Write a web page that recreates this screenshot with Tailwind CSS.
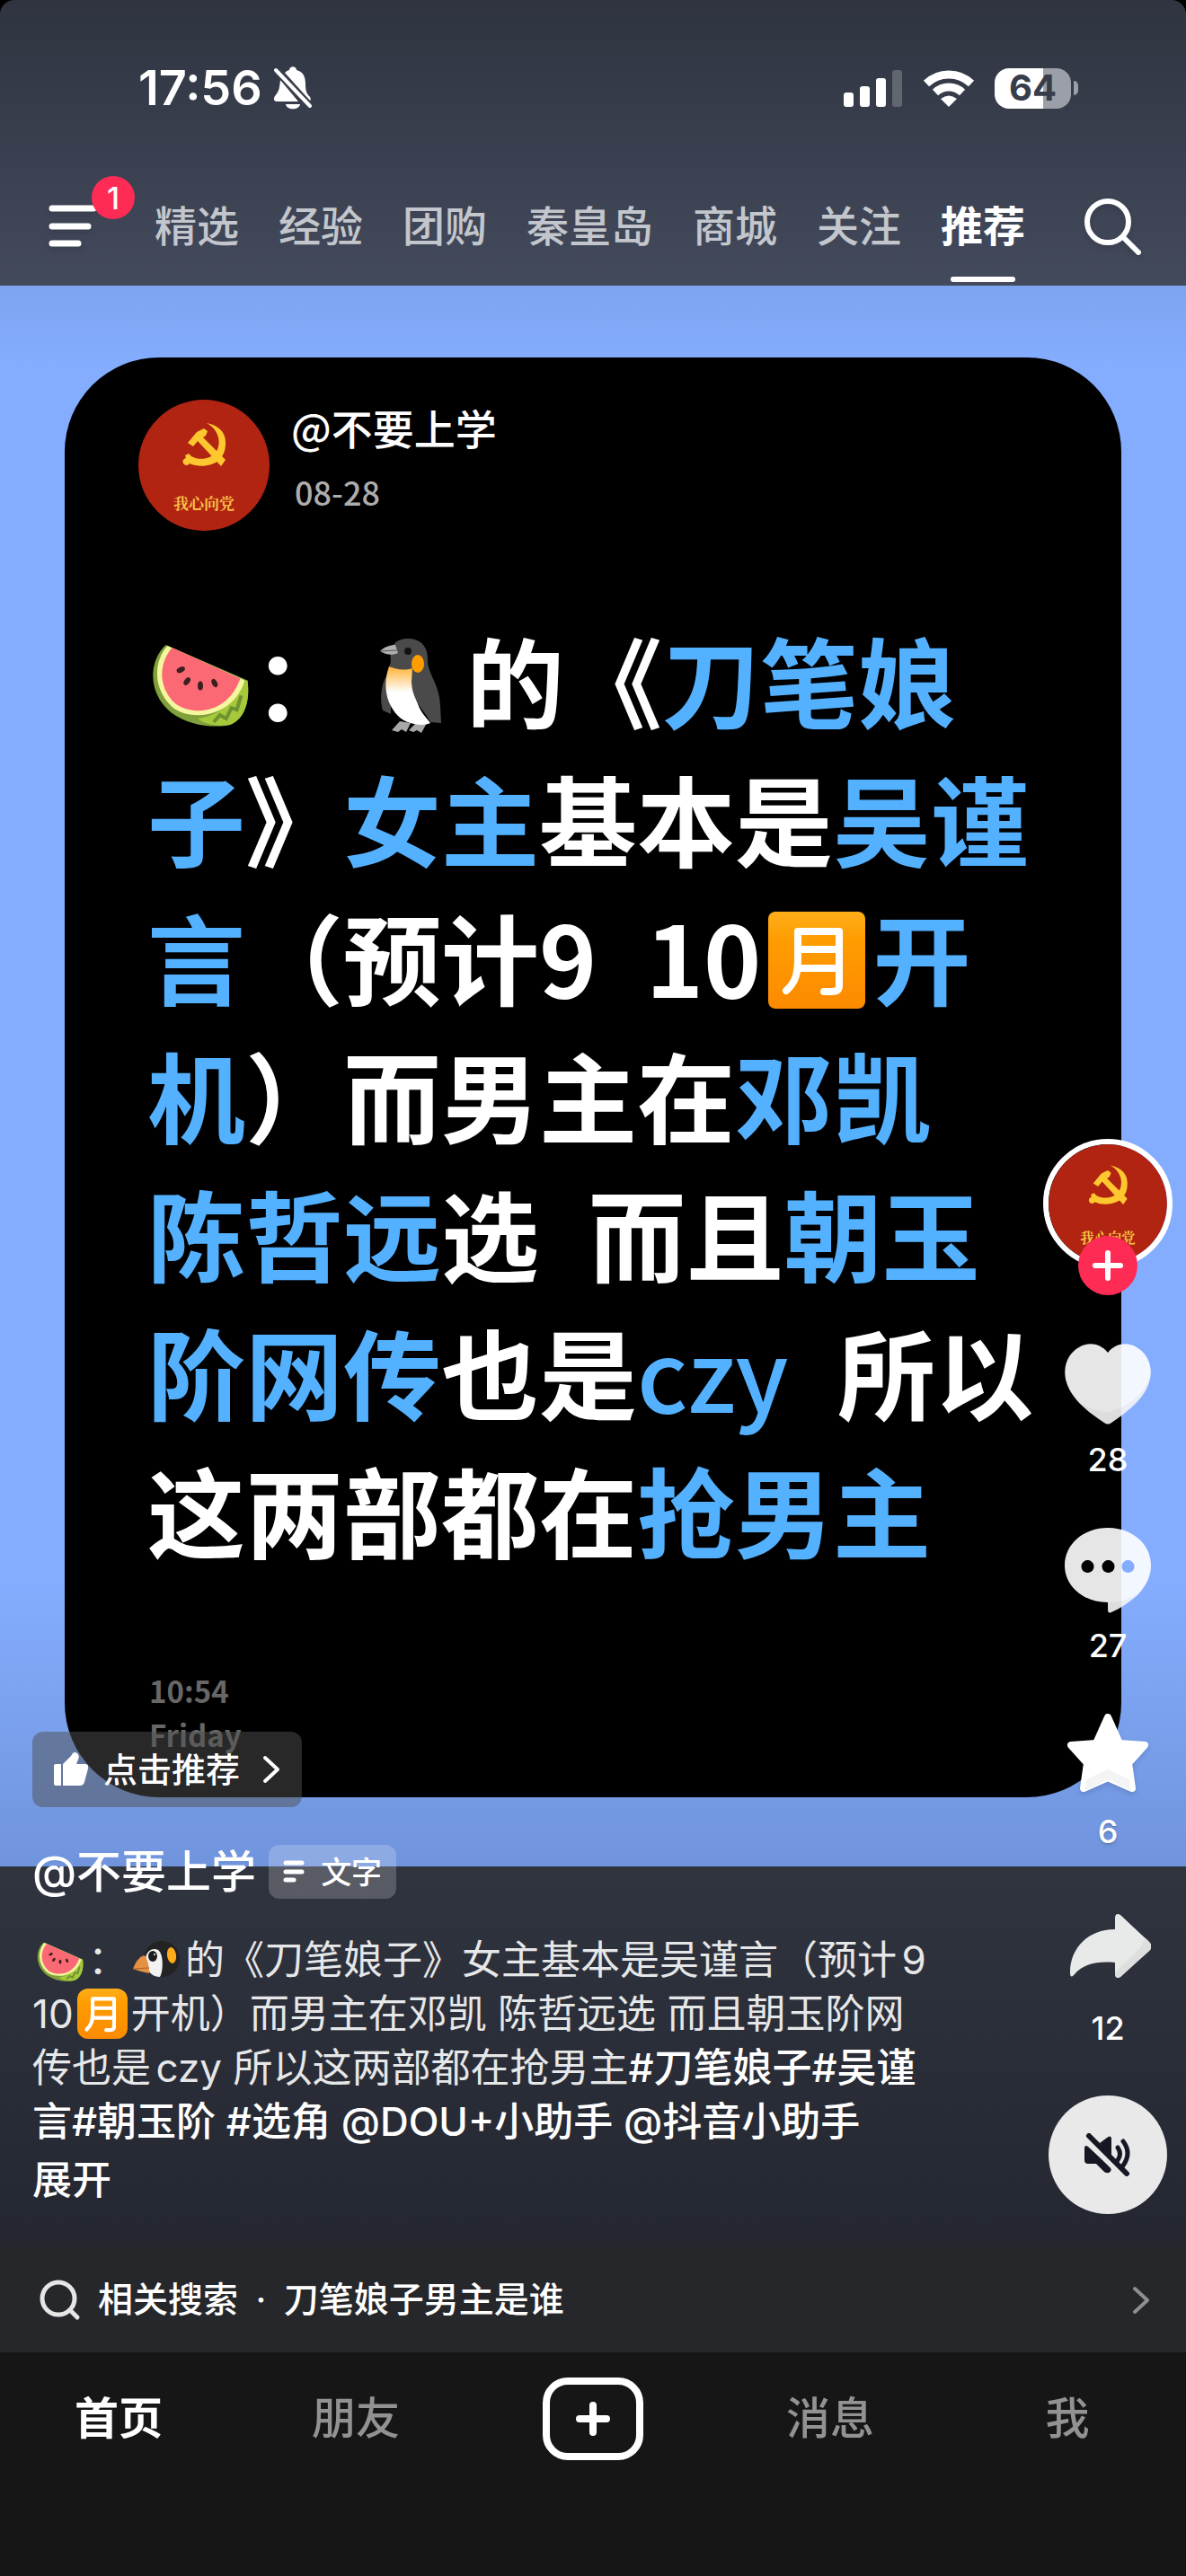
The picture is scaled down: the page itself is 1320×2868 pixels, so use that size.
<!DOCTYPE html>
<html lang="zh-CN">
<head>
  <meta charset="UTF-8" />
  <title>推荐</title>
  <meta name="viewport" content="width=device-width, initial-scale=1" />
  <script src="https://cdn.jsdelivr.net/npm/@tailwindcss/browser@4"></script>
</head>
<body class="bg-black font-['Inter','Noto_Sans_CJK_SC',sans-serif] text-white">

  <!-- shared artwork -->
  <svg class="absolute size-0" aria-hidden="true">
    <defs>
      <linearGradient id="orange" x1="0" y1="0" x2="0" y2="1">
        <stop offset="0" stop-color="#ffae1a" />
        <stop offset="0.3" stop-color="#ff9c00" />
        <stop offset="1" stop-color="#fc8a00" />
      </linearGradient>
      <linearGradient id="belly" x1="0" y1="0" x2="0" y2="1">
        <stop offset="0" stop-color="#ffae2e" />
        <stop offset="0.45" stop-color="#fff" />
      </linearGradient>
    </defs>
    <symbol id="avatar" viewBox="0 0 146 146">
      <circle cx="73" cy="73" r="73" fill="#b22412" />
      <g fill="#fdc82f">
        <path d="M76 26 C91 29 98 38 97 50 C97 57 94 63 90 67 C83 74 67 76 57 71 A4 4 0 1 1 53 65 L52 62 L56 60 L59 63 C68 68 79 66 85 60 C93 51 91 34 76 26 Z" />
        <path d="M55 48 L65 36 L73 32 L77 35 L75 40 L72 42 L97 67 L92 74 L66 46 L61 52 Z" />
      </g>
    </symbol>
    <symbol id="melon" viewBox="0 0 110 93">
      <path d="M16 1 C-4 20 -4 56 22 77 C42 92 70 95 88 91 C106 84 111 62 108 41 Z" fill="#7fa03a" />
      <path d="M88 91 C106 84 111 62 108 41 L100 44 C92 66 78 80 52 84 C62 92 78 93 88 91 Z" fill="#a6c93c" />
      <path d="M70 88 L77 80 L84 84 L90 72 L96 74 L101 58" fill="none" stroke="#6f9130" stroke-width="4" />
      <path d="M18 2 C0 22 3 55 26 73 C48 87 92 82 105 41 Z" fill="#f4f7a0" />
      <path d="M23 4 C6 25 9 52 28 68 C50 82 86 77 100 39 Z" fill="#fb6a74" />
      <g fill="#3d1f1f">
        <ellipse cx="33" cy="29" rx="5" ry="3" transform="rotate(-25 33 29)" />
        <ellipse cx="40" cy="42" rx="5" ry="3" transform="rotate(-55 40 42)" />
        <ellipse cx="55" cy="47" rx="3" ry="5" />
        <ellipse cx="71" cy="44" rx="3" ry="5" transform="rotate(-25 71 44)" />
      </g>
    </symbol>
    <symbol id="month" viewBox="0 0 108 108">
      <rect width="108" height="108" rx="8" fill="url(#orange)" />
      <path d="M33 22 H79 V82 Q79 89 71 89 H62 M33 22 V52 C33 70 30 79 20 88 M33 42 H79 M33 63 H79" fill="none" stroke="#fff" stroke-width="8" stroke-linejoin="round" stroke-linecap="round" />
    </symbol>
  </svg>

  <header class="rounded-t-2xl bg-linear-to-b from-[#2f3440] to-[#434a5c]">
    <div class="flex items-center justify-between pt-[66px] pr-[120px] pl-[154px]">
      <div class="flex items-center gap-3">
        <span class="text-[54px] leading-16 font-semibold">17:56</span>
        <svg class="h-12 w-11" viewBox="0 0 44 48" fill="#fff">
          <path d="M13 7 C15 5 17 4 18 4 C18 -1 26 -1 26 4 C34 6 36 12 36 20 C36 28 38 31 41 34 C42 36 42 37 41 38 Z" />
          <path d="M8 15 C7 24 7 27 2 33 C0 36 1 39 4 39 H28 Z" />
          <path d="M14 42 H30 C29 49 15 49 14 42 Z" />
          <path d="M3 4 L41 44" stroke="#3a404e" stroke-width="8" />
          <path d="M3 4 L41 44" stroke="#fff" stroke-width="4" stroke-linecap="round" />
        </svg>
      </div>
      <div class="flex items-center gap-[22px]">
        <svg class="h-[42px] w-[66px]" viewBox="0 0 66 42" fill="#fff">
          <rect x="0" y="26" width="11" height="16" rx="3" />
          <rect x="18" y="19" width="11" height="23" rx="3" />
          <rect x="36" y="10" width="11" height="32" rx="3" />
          <rect x="54" y="1" width="11" height="41" rx="3" opacity="0.22" />
        </svg>
        <svg class="h-[42px] w-[58px]" viewBox="0 0 58 42" fill="none" stroke="#fff" stroke-width="9">
          <path d="M4 16 A36 36 0 0 1 54 16" />
          <path d="M14 26 A22 22 0 0 1 44 26" />
          <path d="M29 42 L20 33 Q29 26 38 33 Z" fill="#fff" stroke="none" />
        </svg>
        <div class="flex items-center gap-[3px]">
          <span class="flex h-[45px] w-[85px] items-center justify-center rounded-2xl bg-[linear-gradient(90deg,#fff_64%,#9b9fa7_64%)] text-[40px] leading-none font-bold text-[#373d4a]">64</span>
          <span class="h-4 w-[5px] rounded-r-full bg-[#9b9fa7]"></span>
        </div>
      </div>
    </div>

    <nav class="mt-14 flex h-[132px] items-center gap-[22px] pr-[48px] pl-[54px]">
      <button class="relative h-12 w-[96px]" aria-label="菜单">
        <svg class="h-12 w-[54px] drop-shadow-md" viewBox="0 0 54 48" stroke="#fff" stroke-width="7" stroke-linecap="round">
          <path d="M4 4 H50 M4 24 H44 M4 43 H33" />
        </svg>
        <span class="absolute -top-8 right-0 flex size-12 items-center justify-center rounded-full bg-[#fe2c55] text-[34px] font-medium">1</span>
      </button>
      <div class="flex gap-11 self-stretch text-[47px] font-medium text-[#c3c6cc]">
        <a href="#" class="flex items-center">精选</a>
        <a href="#" class="flex items-center">经验</a>
        <a href="#" class="flex items-center">团购</a>
        <a href="#" class="flex items-center">秦皇岛</a>
        <a href="#" class="flex items-center">商城</a>
        <a href="#" class="flex items-center">关注</a>
        <a href="#" class="relative flex items-center font-bold text-white">推荐
          <span class="absolute bottom-1 left-[11px] h-1.5 w-[72px] rounded-sm bg-white"></span>
        </a>
      </div>
      <button class="ml-auto" aria-label="搜索">
        <svg class="size-[68px] drop-shadow-md" viewBox="0 0 68 68" fill="none" stroke="#fff" stroke-width="6" stroke-linecap="round">
          <circle cx="29" cy="29" r="23" />
          <path d="M46 46 L63 63" />
        </svg>
      </button>
    </nav>
  </header>

  <main class="relative">
    <!-- post picture -->
    <div class="bg-[linear-gradient(180deg,#7da4f0_0%,#84adff_5%,#84adff_82%,#7094dc_100%)] px-[72px] pt-20 pb-[77px]">
      <article class="rounded-[105px] bg-black pt-[47px] pb-[45px] font-['Noto_Sans_CJK_SC',sans-serif]">
        <div class="flex gap-6 pl-[82px]">
          <svg class="size-[146px]" viewBox="0 0 146 146">
            <use href="#avatar" />
            <text x="73" y="122" text-anchor="middle" font-size="17" font-weight="700" font-family="Noto Serif CJK SC, Noto Sans CJK SC, serif" fill="#f6c245">我心向党</text>
          </svg>
          <div class="flex flex-col gap-[18px]">
            <h2 class="text-[46px] leading-[60px] font-medium">@不要上学</h2>
            <time class="ml-1 text-4xl leading-[48px] font-medium text-[#adadad]">08-28</time>
          </div>
        </div>

        <p class="mt-[88px] pl-[92px] text-[109px] leading-[154px] font-bold whitespace-nowrap">
          <svg class="mx-1 inline h-[92px] w-[110px] align-[-6px]"><use href="#melon" /></svg>：<svg class="mr-7 ml-8 inline h-[106px] w-[68px] align-[-14px]" viewBox="0 0 68 106">
            <path d="M8 40 C0 52 0 70 3 80 L12 84 L12 40 Z" fill="#4a4a4a" />
            <path d="M13 102 L22 92 L34 94 L29 104 L24 101 L20 104 Z M32 102 L40 94 L52 94 L46 105 L41 102 L37 104 Z" fill="#a8a8a8" />
            <path d="M10 31 C20 34 28 33 36 30 C36 50 38 70 48 84 L56 94 C48 98 30 96 20 86 C8 74 2 54 10 31 Z" fill="url(#belly)" />
            <path d="M10 31 C14 25 10 20 12 12 C16 2 24 0 31 0 C46 0 53 10 53 22 C52 38 66 50 67 74 L68 94 L56 93 C48 78 36 70 35 48 L36 33 C26 36 18 34 10 31 Z" fill="#4a4a4a" />
            <path d="M0 14 C5 9 11 7 17 7 L20 16 C14 19 6 18 0 14 Z" fill="#b0b0b0" />
            <path d="M1 14 L19 13" stroke="#555" stroke-width="1" />
            <ellipse cx="42" cy="28" rx="7" ry="10" fill="#ff9d00" />
            <circle cx="31" cy="14" r="4" fill="#111" />
          </svg>的《<span class="text-[#54b1ff]">刀笔娘</span><br />
          <span class="text-[#54b1ff]">子</span>》<span class="text-[#54b1ff]">女主</span>基本是<span class="text-[#54b1ff]">吴谨</span><br />
          <span class="text-[#54b1ff]">言</span>（预计9&ensp;10<svg class="mx-2 inline size-[108px] align-[-12px]" role="img" aria-label="月"><use href="#month" /></svg><span class="text-[#54b1ff]">开</span><br />
          <span class="text-[#54b1ff]">机</span>）而男主在<span class="text-[#54b1ff]">邓凯</span><br />
          <span class="text-[#54b1ff]">陈哲远</span>选&ensp;而且<span class="text-[#54b1ff]">朝玉</span><br />
          <span class="text-[#54b1ff]">阶网传</span>也是<span class="font-medium text-[#54b1ff]">czy</span>&ensp;所以<br />
          这两部都在<span class="text-[#54b1ff]">抢男主</span>
        </p>

        <p class="mt-[101px] pl-[94px] text-[33px] leading-[49px] font-bold text-[#676767]">10:54<br />Friday</p>
      </article>
    </div>

    <!-- author and caption -->
    <section class="bg-linear-to-b from-[#30343f] to-[#242730] px-9 pb-[45px]">
      <div class="relative -top-[150px] -mb-[150px] flex w-[1010px] flex-col items-start">
        <button class="flex h-[84px] items-center gap-[17px] rounded-xl bg-[#4f4f4f]/50 px-6 text-[38px] font-medium">
          <svg class="size-[38px]" viewBox="0 0 38 38" fill="#fff">
            <path d="M0 15 Q0 13 2 13 H8 V37 H2 Q0 37 0 35 Z" />
            <path d="M10 13 L19 4 L21 1 Q23 -1 26 1 Q29 4 27 8 L25 13 H35 Q39 13 38 18 L34 33 Q33 37 29 37 H10 Z" />
          </svg>
          点击推荐
          <svg class="ml-2 h-[34px] w-5" viewBox="0 0 20 34" fill="none" stroke="#fff" stroke-width="4" stroke-linecap="round" stroke-linejoin="round"><path d="M3 4 L17 17 L3 30" /></svg>
        </button>

        <div class="mt-[42px] flex h-[60px] items-center gap-[14px]">
          <a href="#" class="text-[50px] font-medium">@不要上学</a>
          <span class="flex h-[60px] items-center gap-[18px] rounded-xl bg-white/20 px-4 text-[34px] font-medium">
            <svg class="h-[26px] w-6" viewBox="0 0 24 26" stroke="#fff" stroke-width="5" stroke-linecap="round"><path d="M3 3 H21 M3 13 H21 M3 22 H12" /></svg>
            文字
          </span>
        </div>

        <p class="mt-[38px] text-[44px] leading-[60px] whitespace-nowrap text-[#e6e7e8] [text-autospace:normal]">
          <svg class="mx-1 inline h-11 w-[54px] align-[-8px]"><use href="#melon" /></svg>：<svg class="mx-1.5 inline h-[42px] w-[52px] align-[-4px]" viewBox="0 0 52 42">
            <circle cx="32" cy="21" r="20" fill="#232323" />
            <path d="M14 22 C14 12 22 8 28 11 C34 15 34 34 30 41 C22 41 15 36 14 22 Z" fill="#f2f2f2" />
            <ellipse cx="22" cy="18" rx="5" ry="6" fill="#1c1c1c" />
            <circle cx="24" cy="16" r="1" fill="#fff" />
            <path d="M0 32 C4 22 8 18 13 17 C17 23 18 30 18 37 C12 36 6 34 0 32 Z" fill="#e59042" />
            <path d="M0 32 C7 32 12 31 18 31" fill="none" stroke="#a8612a" stroke-width="1" />
            <ellipse cx="43" cy="17" rx="5" ry="9" fill="#ffab1a" transform="rotate(-8 43 17)" />
          </svg>的《刀笔娘子》女主基本是吴谨言（预计9<br />
          10<svg class="mx-1 inline size-14 rounded-xl align-[-12px]" role="img" aria-label="月"><use href="#month" /></svg>开机）而男主在邓凯 陈哲远选 而且朝玉阶网<br />
          传也是czy 所以这两部都在抢男主<a href="#" class="font-medium text-white [text-autospace:no-autospace]">#刀笔娘子#吴谨</a><br />
          <a href="#" class="font-medium text-white [text-autospace:no-autospace]">言#朝玉阶 #选角 @DOU+小助手 @抖音小助手</a>
        </p>
        <button class="mt-[5px] text-[44px] leading-[60px] font-medium">展开</button>
      </div>

      <!-- action rail -->
      <aside class="absolute right-[15px] bottom-[154px] flex w-36 flex-col items-center gap-[51px] text-4xl leading-[48px] font-medium">
        <div class="relative h-[174px] w-36">
          <svg class="size-36 rounded-full border-6 border-white" viewBox="0 0 146 146">
            <use href="#avatar" />
            <text x="73" y="122" text-anchor="middle" font-size="17" font-weight="700" font-family="Noto Serif CJK SC, Noto Sans CJK SC, serif" fill="#f6c245">我心向党</text>
          </svg>
          <button class="absolute bottom-0 left-[39px] flex size-[66px] items-center justify-center rounded-full bg-[#fe2c55]" aria-label="关注作者">
            <svg class="size-9" viewBox="0 0 36 36" stroke="#fff" stroke-width="6" stroke-linecap="round"><path d="M4 18 H32 M18 4 V32" /></svg>
          </button>
        </div>
        <button class="flex flex-col items-center gap-3">
          <svg class="size-24" viewBox="0 0 96 96">
            <path d="M48 13 C57 2 70 1 80 7 C93 14 99 30 94 46 C88 66 67 81 52 91 Q48 94 44 91 C29 81 8 66 2 46 C-3 30 3 14 16 7 C26 1 39 2 48 13 Z" fill="#fff" fill-opacity="0.9" />
            <path d="M95 34 C92 58 70 74 48 79 C34 79 22 72 14 66 C24 78 36 86 44 91 Q48 94 52 91 C67 81 88 66 94 46 Z" fill="#000" fill-opacity="0.04" />
          </svg>
          <span>28</span>
        </button>
        <button class="flex flex-col items-center gap-3">
          <svg class="size-24" viewBox="0 0 96 96">
            <path fill-rule="evenodd" d="M48 1 C75 1 96 19 96 43 C96 66 76 84 52 95 Q48 97 48 92 V84 C21 84 0 66 0 43 C0 19 21 1 48 1 Z M25 37 a7 7 0 1 0 1 0 Z M48 37 a7 7 0 1 0 1 0 Z M70 37 a7 7 0 1 0 1 0 Z" fill="#fff" fill-opacity="0.9" />
            <path d="M48 84 C62 84 74 80 83 73 C74 83 63 90 52 95 Q48 97 48 92 Z" fill="#000" fill-opacity="0.04" />
          </svg>
          <span>27</span>
        </button>
        <button class="flex flex-col items-center gap-3">
          <svg class="size-24 drop-shadow-md" viewBox="0 0 96 96">
            <path d="M48 5 L61 34 L89 36 L71 56 L75 84 L48 72 L21 84 L25 56 L7 36 L35 34 Z" fill="#fff" stroke="#fff" stroke-width="8" stroke-linejoin="round" />
            <path d="M22 87 L24 74 L48 63 L72 74 L74 87 L48 74 Z" fill="#f4f4f5" />
          </svg>
          <span class="text-shadow-md">6</span>
        </button>
        <button class="flex flex-col items-center gap-3">
          <svg class="h-[108px] w-24" viewBox="0 0 96 108">
            <path d="M56 22 Q56 15 62 18 L94 48 Q99 53 94 58 L62 87 Q56 90 56 83 V71 C36 69 20 73 11 84 Q6 90 6 82 C6 55 26 34 56 34 Z" fill="#e8e9e9" />
            <path d="M56 82 L84 55 L90 44 L94 48 Q99 53 94 58 L62 87 Q56 90 56 83 Z" fill="#dddede" />
          </svg>
          <span>12</span>
        </button>
        <button class="flex size-[132px] items-center justify-center rounded-full bg-[#e9e9ea]" aria-label="静音">
          <svg class="h-12 w-[54px]" viewBox="0 0 54 48" fill="#151823">
            <path d="M18 11 L26 5 Q31 1 31 7 V26 Z" />
            <path d="M1 17 Q1 12 5 15 L30 38 Q32 42 28 44 Q26 45 23 43 L14 34 H5 Q1 34 1 30 Z" />
            <path d="M38 16 Q43 23 38 30 M44 9 Q54 22 44 36" fill="none" stroke="#151823" stroke-width="5" stroke-linecap="round" />
            <path d="M3 9 L42 48" stroke="#e9e9ea" stroke-width="4" />
            <path d="M6 3 L48 45" stroke="#151823" stroke-width="6" stroke-linecap="round" />
          </svg>
        </button>
      </aside>
    </section>

    <a href="#" class="flex h-[117px] items-center gap-[19px] bg-[#26272b] pr-10 pl-11 text-[39px] font-medium">
      <svg class="size-[46px]" viewBox="0 0 46 46" fill="none" stroke="#e6e6e6" stroke-width="5" stroke-linecap="round">
        <circle cx="21" cy="21" r="18" />
        <path d="M34 34 L42 42" />
      </svg>
      <span>相关搜索&ensp;·&ensp;刀笔娘子男主是谁</span>
      <svg class="ml-auto h-8 w-5" viewBox="0 0 20 32" fill="none" stroke="#8e8f91" stroke-width="4" stroke-linecap="round" stroke-linejoin="round"><path d="M3 3 L17 16 L3 29" /></svg>
    </a>
  </main>

  <footer class="bg-[#161616] pb-[102px]">
    <nav class="grid h-[147px] grid-cols-5 place-items-center text-[49px] font-medium text-[#929292]">
      <a href="#" class="font-bold text-white">首页</a>
      <a href="#">朋友</a>
      <button class="flex h-[92px] w-28 items-center justify-center rounded-[28px] border-8 border-white" aria-label="发布">
        <svg class="size-10" viewBox="0 0 40 40" stroke="#fff" stroke-width="8" stroke-linecap="round"><path d="M5 20 H35 M20 5 V35" /></svg>
      </button>
      <a href="#">消息</a>
      <a href="#">我</a>
    </nav>
  </footer>
</body>
</html>
